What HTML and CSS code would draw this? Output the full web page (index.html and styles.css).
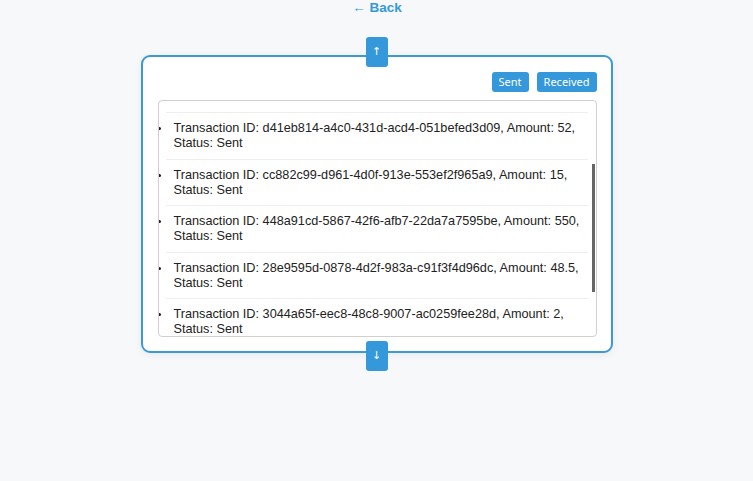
FILE: index.html
```html
<!DOCTYPE html>
<html>
<head>
<meta charset="utf-8">
<link rel="stylesheet" href="styles.css">
</head>
<body>
<a class="back" href="#">← Back</a>
<div class="stage">
  <button class="nav-btn nav-up">↑</button>
  <div class="card">
    <div class="filters">
      <button class="filter">Sent</button>
      <button class="filter">Received</button>
    </div>
    <div class="list-box">
      <ul class="tx-list">
        <li>Transaction ID: d41eb814-a4c0-431d-acd4-051befed3d09, Amount: 52, Status: Sent</li>
        <li>Transaction ID: cc882c99-d961-4d0f-913e-553ef2f965a9, Amount: 15, Status: Sent</li>
        <li>Transaction ID: 448a91cd-5867-42f6-afb7-22da7a7595be, Amount: 550, Status: Sent</li>
        <li>Transaction ID: 28e9595d-0878-4d2f-983a-c91f3f4d96dc, Amount: 48.5, Status: Sent</li>
        <li>Transaction ID: 3044a65f-eec8-48c8-9007-ac0259fee28d, Amount: 2, Status: Sent</li>
      </ul>
      <div class="scroll-thumb"></div>
    </div>
  </div>
  <button class="nav-btn nav-down">↓</button>
</div>
</body>
</html>
```
FILE: styles.css
```css
html, body {
  margin: 0;
  padding: 0;
}
body {
  background: #f7f8fa;
  font-family: "Liberation Sans", Arial, sans-serif;
  width: 753px;
  height: 481px;
  overflow: hidden;
}
.back {
  display: block;
  text-align: center;
  color: #3498db;
  font-weight: bold;
  font-size: 13.5px;
  line-height: 15px;
  text-decoration: none;
  margin-left: 1px;
}
.stage {
  display: flex;
  flex-direction: column;
  align-items: center;
  margin-top: 22px;
}
.nav-btn {
  position: relative;
  z-index: 2;
  width: 22px;
  height: 30px;
  padding: 0;
  border: none;
  border-radius: 3px;
  background: #3498db;
  color: #fff;
  font-family: "DejaVu Sans", sans-serif;
  font-size: 11px;
  line-height: 30px;
}
.nav-up {
  margin-bottom: -12px;
}
.nav-down {
  margin-top: -12px;
}
.card {
  box-sizing: border-box;
  width: 472px;
  height: 298px;
  background: #fff;
  border: 2px solid #3a9ad9;
  border-radius: 9px;
  padding: 15px 14px 14px 15px;
  box-shadow: 0 2px 8px rgba(0, 0, 0, 0.06);
}
.filters {
  display: flex;
  justify-content: flex-end;
  gap: 8px;
  height: 20px;
}
.filter {
  height: 20px;
  padding: 0 7px;
  border: none;
  border-radius: 3px;
  background: #3498db;
  color: #fff;
  font-family: "Noto Sans", sans-serif;
  font-size: 11px;
  line-height: 20px;
}
.list-box {
  position: relative;
  box-sizing: border-box;
  margin-top: 8px;
  height: 237px;
  border: 1px solid #d0d0d0;
  border-radius: 4px;
  overflow: hidden;
}
.tx-list {
  margin: 0;
  padding: 11px 8px 0 7px;
  list-style: none;
  color: #222;
  font-size: 12.7px;
  line-height: 15px;
}
.tx-list li {
  position: relative;
  padding: 8px 4px 7.5px 8px;
  border-top: 1px solid #eeeeee;
}
.tx-list li::before {
  content: "";
  position: absolute;
  left: -8px;
  top: 14px;
  width: 3px;
  height: 3px;
  border-radius: 50%;
  background: #222;
}
.scroll-thumb {
  position: absolute;
  right: 1px;
  top: 63px;
  width: 3px;
  height: 128px;
  background: #666;
}
```
